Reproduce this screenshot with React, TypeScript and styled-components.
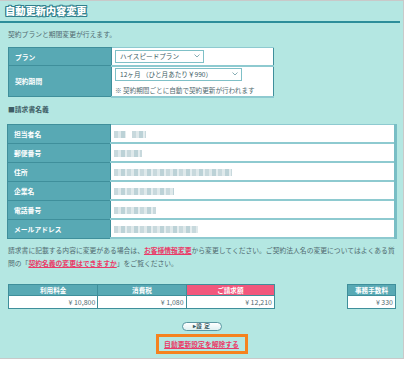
import styled, { createGlobalStyle } from "styled-components";

const GlobalStyle = createGlobalStyle`
  body {
    margin: 0;
    background: #ffffff;
    font-family: "Noto Sans CJK JP", "Noto Sans", sans-serif;
  }
`;

const Page = styled.div`
  box-sizing: border-box;
  width: 404px;
  height: 359px;
  background: #b4e7e2;
  border: 1px solid #c9c9c9;
  border-left: none;
  color: #506a70;
  font-size: 6.8px;
  display: flex;
  flex-direction: column;
`;

const Title = styled.h1`
  margin: 0 3px 0 0;
  padding: 3px 0 3px 5px;
  height: 22px;
  box-sizing: border-box;
  font-size: 10.4px;
  line-height: 14px;
  font-weight: 900;
  color: #ffffff;
  letter-spacing: -0.2px;
  text-shadow: 1px 0 0 #2f7f8c, -1px 0 0 #2f7f8c, 0 1px 0 #2f7f8c, 0 -1px 0 #2f7f8c,
    1px 1px 0 #2f7f8c, -1px -1px 0 #2f7f8c, 1px -1px 0 #2f7f8c, -1px 1px 0 #2f7f8c;
  border-bottom: 2px solid #2d8e9a;
`;

const Lead = styled.p`
  margin: 6px 0 0 8px;
  line-height: 10px;
`;

const PlanTable = styled.table`
  margin: 8px 0 0 8px;
  width: 266px;
  border-collapse: collapse;
  border: 1px solid #3f8f9b;
`;

const BillTable = styled(PlanTable)`
  margin: 10px 0 0 7px;
  width: 390px;
  border: 1px solid #3f8f9b;
  border-right: 3px solid #78bec5;
`;

const Row = styled.tr<{ $h: number }>`
  height: ${(p) => p.$h}px;
`;

const Label = styled.th`
  width: 96px;
  background: #58a9b4;
  color: #ffffff;
  font-weight: 700;
  text-align: left;
  padding: 0 0 0 6px;
  border: 1px solid #3f8f9b;
  font-size: 6.8px;
`;

const Value = styled.td`
  background: #ffffff;
  border: 1px solid #8ecad0;
  border-width: 1px 0 2px 1px;
  padding: 0 3px;
  vertical-align: middle;
`;

const Select = styled.div<{ $w: number }>`
  box-sizing: border-box;
  width: ${(p) => p.$w}px;
  height: 13px;
  border: 1px solid #7fc0c7;
  background: #ffffff;
  display: flex;
  align-items: center;
  justify-content: space-between;
  padding: 0 3px 0 4px;
  color: #3c5c64;
  font-size: 6.6px;
`;

const Chevron = () => (
  <svg width="6" height="4" viewBox="0 0 6 4">
    <path d="M0.5 0.5 L3 3 L5.5 0.5" fill="none" stroke="#7aa5ad" strokeWidth="0.9" />
  </svg>
);

const Note = styled.div`
  margin-top: 4px;
  color: #506a70;
  font-size: 6.6px;
`;

const Section = styled.div`
  margin: 6px 0 0 8px;
  font-weight: 700;
  color: #3e5d65;
  line-height: 10px;
`;

const Mosaic = styled.span<{ $w: number }>`
  display: inline-block;
  width: ${(p) => p.$w}px;
  height: 7px;
  margin-right: 6px;
  vertical-align: middle;
  background: repeating-linear-gradient(
    90deg,
    #c8d9dd 0 4px,
    #dfe9eb 4px 7px,
    #bcd2d7 7px 11px,
    #e4edef 11px 13px
  );
  filter: blur(0.6px);
`;

const Notice = styled.div`
  margin: 5px 8px 0 8px;
  font-size: 6.8px;
  color: #506a70;
`;

const NoticeLine = styled.div`
  line-height: 12.5px;
  white-space: nowrap;
`;

const Link = styled.a`
  color: #ea3a68;
  font-weight: 700;
  text-decoration: underline;
`;

const FeeRow = styled.div`
  margin: 15px 7px 0 8px;
  display: flex;
  justify-content: space-between;
  align-items: flex-start;
`;

const FeeTable = styled.div<{ $cols: number; $w: number }>`
  display: grid;
  grid-template-columns: repeat(${(p) => p.$cols}, 1fr);
  width: ${(p) => p.$w}px;
  border: 1px solid #3f8f9b;
  box-sizing: border-box;
`;

const FeeHead = styled.div<{ $pink?: boolean }>`
  height: 10px;
  line-height: 10px;
  background: ${(p) => (p.$pink ? "#f2577c" : "#58a9b4")};
  color: #ffffff;
  font-weight: 700;
  text-align: center;
  font-size: 6.6px;
  border-left: 1px solid #3f8f9b;
  &:first-child {
    border-left: none;
  }
`;

const FeeValue = styled.div<{ $first?: boolean }>`
  height: 12px;
  line-height: 12px;
  background: #ffffff;
  text-align: right;
  padding-right: 2px;
  font-size: 7px;
  color: #506a70;
  border-left: ${(p) => (p.$first ? "none" : "1px solid #3f8f9b")};
  border-top: 1px solid #3f8f9b;
`;

const Actions = styled.div`
  margin-top: 13px;
  display: flex;
  flex-direction: column;
  align-items: center;
`;

const SubmitButton = styled.button`
  box-sizing: border-box;
  width: 40px;
  height: 9px;
  padding: 0;
  border: 1px solid #5b97a2;
  border-radius: 5px;
  background: linear-gradient(#ffffff, #dff1f2);
  color: #365760;
  font-family: inherit;
  font-size: 5.6px;
  font-weight: 700;
  line-height: 7px;
  letter-spacing: 0.5px;
`;

const CancelBox = styled.div`
  margin-top: 3px;
  box-sizing: border-box;
  width: 92px;
  height: 20px;
  border: 3px solid #f5821f;
  display: flex;
  align-items: center;
  justify-content: center;
`;

const blocks: { label: string; w: number[] }[] = [
  { label: "担当者名", w: [12, 14] },
  { label: "郵便番号", w: [28] },
  { label: "住所", w: [118] },
  { label: "企業名", w: [60] },
  { label: "電話番号", w: [42] },
  { label: "メールアドレス", w: [84] },
];

export default function App() {
  return (
    <>
      <GlobalStyle />
      <Page>
        <Title>自動更新内容変更</Title>
        <Lead>契約プランと期間変更が行えます。</Lead>

        <PlanTable>
          <tbody>
            <Row $h={18}>
              <Label>プラン</Label>
              <Value>
                <Select $w={89}>
                  ハイスピードプラン
                  <Chevron />
                </Select>
              </Value>
            </Row>
            <Row $h={31}>
              <Label>契約期間</Label>
              <Value>
                <Select $w={127}>
                  12ヶ月 （ひと月あたり￥990）
                  <Chevron />
                </Select>
                <Note>※ 契約期間ごとに自動で契約更新が行われます</Note>
              </Value>
            </Row>
          </tbody>
        </PlanTable>

        <Section>■請求書名義</Section>

        <BillTable>
          <tbody>
            {blocks.map((b) => (
              <Row $h={19} key={b.label}>
                <Label>{b.label}</Label>
                <Value>
                  {b.w.map((w, i) => (
                    <Mosaic $w={w} key={i} />
                  ))}
                </Value>
              </Row>
            ))}
          </tbody>
        </BillTable>

        <Notice>
          <NoticeLine>
            請求書に記載する内容に変更がある場合は、<Link>お客様情報変更</Link>
            から変更してください。ご契約法人名の変更についてはよくある質
          </NoticeLine>
          <NoticeLine>
            問の「<Link>契約名義の変更はできますか</Link>」をご覧ください。
          </NoticeLine>
        </Notice>

        <FeeRow>
          <FeeTable $cols={3} $w={267}>
            <FeeHead>利用料金</FeeHead>
            <FeeHead>消費税</FeeHead>
            <FeeHead $pink>ご請求額</FeeHead>
            <FeeValue $first>¥ 10,800</FeeValue>
            <FeeValue>¥ 1,080</FeeValue>
            <FeeValue>¥ 12,210</FeeValue>
          </FeeTable>
          <FeeTable $cols={1} $w={49}>
            <FeeHead>事務手数料</FeeHead>
            <FeeValue $first>¥ 330</FeeValue>
          </FeeTable>
        </FeeRow>

        <Actions>
          <SubmitButton>▸設 定</SubmitButton>
          <CancelBox>
            <Link>自動更新設定を解除する</Link>
          </CancelBox>
        </Actions>
      </Page>
    </>
  );
}
